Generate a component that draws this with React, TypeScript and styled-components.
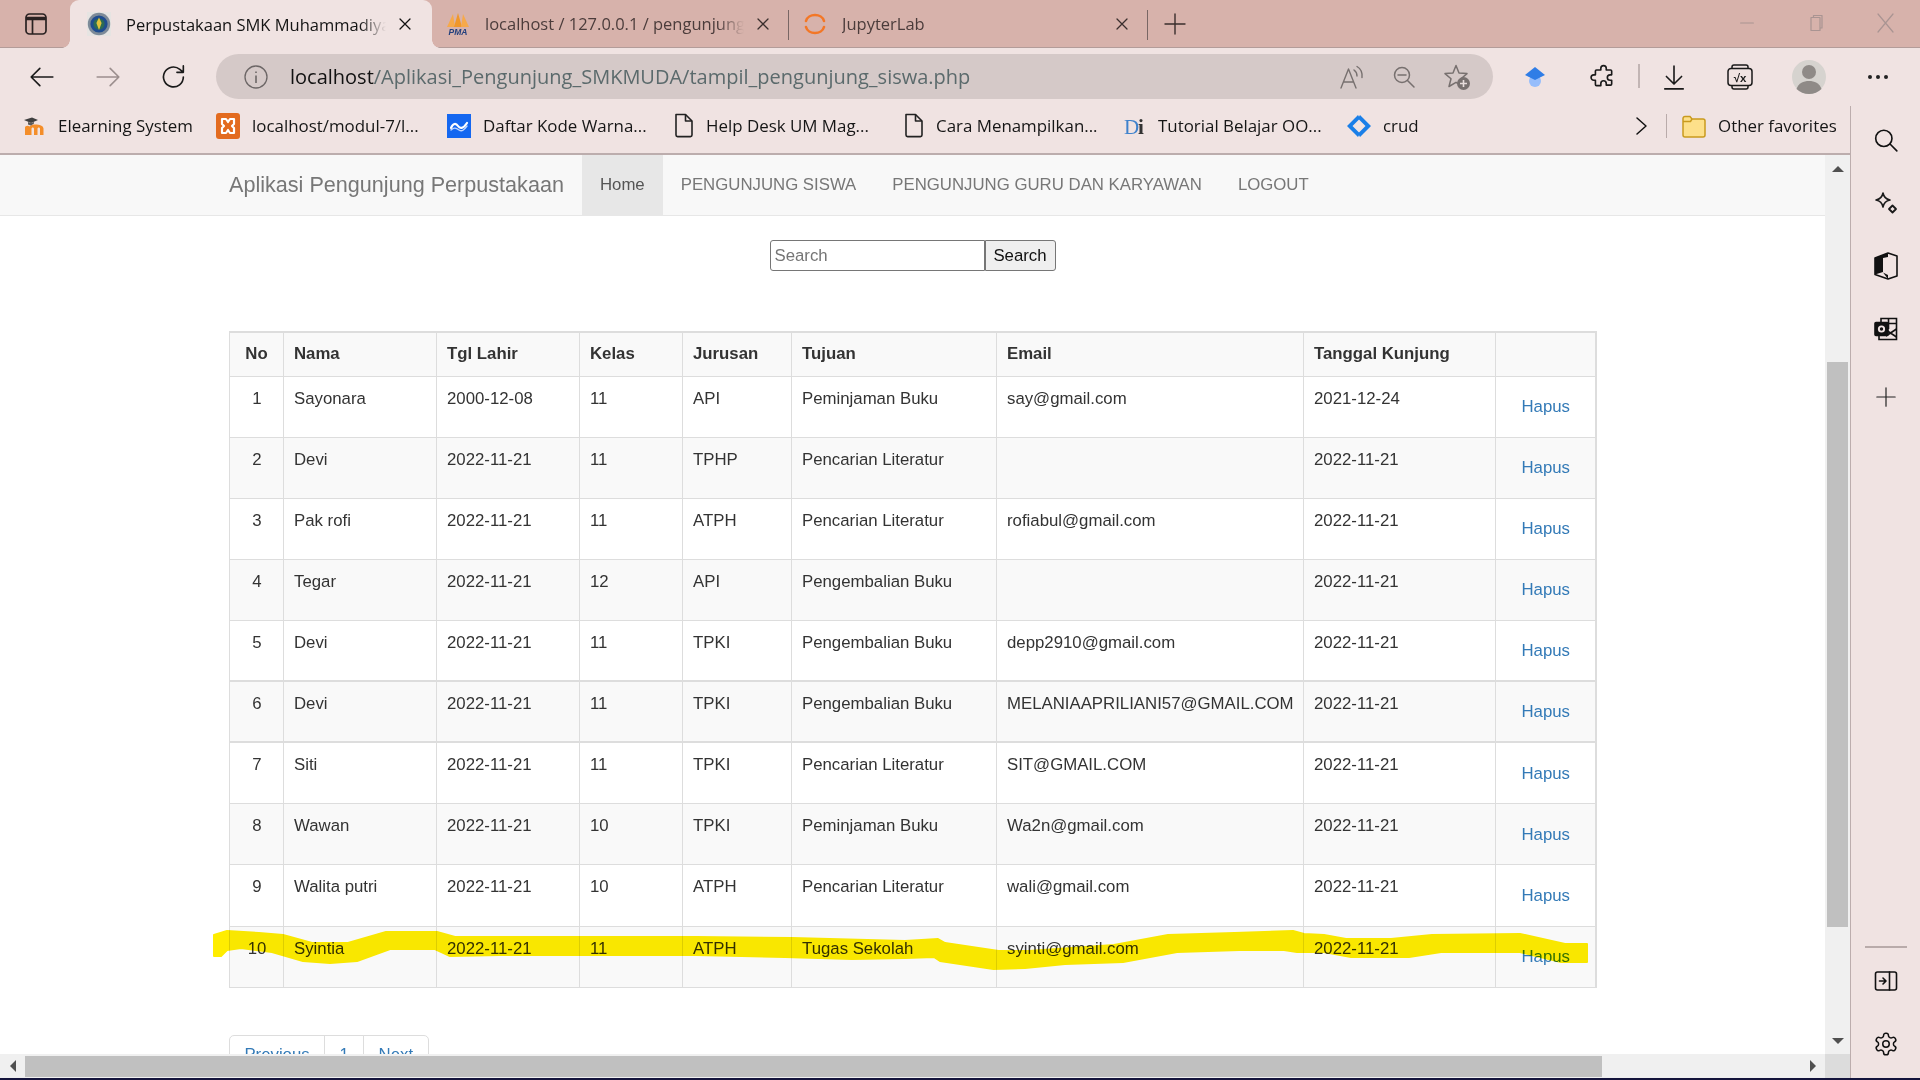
import React from "react";
import styled, { createGlobalStyle } from "styled-components";

const Global = createGlobalStyle`
  html, body { margin: 0; padding: 0; background: #f0e3e2; }
  * { box-sizing: border-box; }
`;

const chromeFont = `"Open Sans", "Noto Sans", sans-serif`;
const pageFont = `"Liberation Sans", Arial, sans-serif`;

const Screen = styled.div`
  width: 1920px;
  height: 1080px;
  overflow: hidden;
  display: flex;
  flex-direction: column;
  background: #f0e3e2;
  font-family: ${chromeFont};
`;

/* ---------- tab strip ---------- */
const TabStrip = styled.div`
  height: 48px;
  flex: none;
  display: flex;
  align-items: stretch;
  padding-right: 1px;
  background: #d7b2ab;
  border-bottom: 1px solid #b39c99;
`;
const StripToggle = styled.div`
  width: 70px;
  display: flex;
  align-items: center;
  justify-content: center;
  padding-left: 2px;
`;
const Tab = styled.div<{ $width: number; $active?: boolean }>`
  position: relative;
  width: ${(p) => p.$width}px;
  height: ${(p) => (p.$active ? "48px" : "47px")};
  display: flex;
  align-items: center;
  padding: 0 ${(p) => (p.$active ? "17px" : "15px")} 0 ${(p) => (p.$active ? "17px" : "14px")};
  background: ${(p) => (p.$active ? "#f0e3e2" : "transparent")};
  border-radius: ${(p) => (p.$active ? "9px 9px 0 0" : "0")};
  color: ${(p) => (p.$active ? "#141414" : "#4b3c3b")};
  ${(p) =>
    p.$active &&
    `
    &::before, &::after {
      content: "";
      position: absolute;
      bottom: 0;
      width: 8px;
      height: 8px;
    }
    &::before { left: -8px; background: radial-gradient(circle at 0 0, transparent 7.5px, #f0e3e2 8px); }
    &::after { right: -8px; background: radial-gradient(circle at 100% 0, transparent 7.5px, #f0e3e2 8px); }
  `}
`;
const TabTitle = styled.span`
  flex: 1;
  min-width: 0;
  margin: 0 9px 0 15px;
  font-size: 16.5px;
  white-space: nowrap;
  overflow: hidden;
  -webkit-mask-image: linear-gradient(to right, #000 calc(100% - 26px), transparent);
  mask-image: linear-gradient(to right, #000 calc(100% - 26px), transparent);
`;
const TabDivider = styled.div`
  width: 1px;
  height: 30px;
  margin-top: 10px;
  background: #786664;
`;
const NewTab = styled.div`
  width: 54px;
  display: flex;
  align-items: center;
  justify-content: center;
`;
const StripSpacer = styled.div`
  flex: 1;
`;
const WindowButton = styled.div`
  width: 69px;
  display: flex;
  align-items: center;
  justify-content: center;
  padding-bottom: 2px;
`;

/* ---------- toolbar ---------- */
const Toolbar = styled.div`
  height: 58px;
  flex: none;
  display: flex;
  align-items: flex-start;
  padding: 6px 0 0 9px;
`;
const ToolButton = styled.div<{ $width?: number }>`
  width: ${(p) => p.$width ?? 66}px;
  height: 45px;
  flex: none;
  display: flex;
  align-items: center;
  justify-content: center;
`;
const PuzzleButton = styled(ToolButton)`
  padding-left: 3px;
`;
const AddressBar = styled.div`
  width: 1277px;
  height: 45px;
  margin: 0 9px;
  flex: none;
  display: flex;
  align-items: center;
  padding: 0 22px 0 28px;
  background: #d5c9c8;
  border-radius: 23px;
`;
const AddressText = styled.div`
  flex: 1;
  margin-left: 22px;
  font-size: 20px;
  color: #5b6a6c;
  white-space: nowrap;
`;
const AddressHost = styled.span`
  color: #111;
`;
const AddressIcons = styled.div`
  display: flex;
  align-items: center;
  gap: 27px;
`;
const ToolDivider = styled.div`
  width: 2px;
  height: 24px;
  margin: 10px 1px 0 4px;
  background: #c2b5b4;
`;

/* ---------- body ---------- */
const Workspace = styled.div`
  flex: 1;
  min-height: 0;
  display: flex;
`;
const MainColumn = styled.div`
  width: 1850px;
  flex: none;
  display: flex;
  flex-direction: column;
`;
const BookmarksBar = styled.div`
  height: 47px;
  flex: none;
  display: flex;
  align-items: center;
  padding: 0 0 8px 22px;
  color: #161616;
  font-size: 16.9px;
`;
const Bookmark = styled.div<{ $width?: number }>`
  width: ${(p) => (p.$width ? `${p.$width}px` : "auto")};
  flex: none;
  display: flex;
  align-items: center;
  gap: 12px;
  white-space: nowrap;
`;
const BookmarkTail = styled.div`
  margin-left: auto;
  display: flex;
  align-items: center;
`;
const BarDivider = styled.div`
  width: 1px;
  height: 24px;
  margin: 0 15px 0 13px;
  background: #b9abaa;
`;
const Frame = styled.div`
  flex: 1;
  min-height: 0;
  display: flex;
  flex-direction: column;
  border-top: 2px solid #bcadad;
`;
const FrameTop = styled.div`
  flex: 1;
  min-height: 0;
  display: flex;
`;
const Page = styled.div`
  position: relative;
  flex: 1;
  min-width: 0;
  overflow: hidden;
  background: #fff;
  color: #333;
  font-family: ${pageFont};
  font-size: 16.8px;
  line-height: 24px;
`;

/* ---------- navbar ---------- */
const Navbar = styled.nav`
  height: 61px;
  display: flex;
  align-items: stretch;
  padding-left: 229px;
  background: #f8f8f8;
  border-bottom: 1px solid #e7e7e7;
`;
const Brand = styled.div`
  display: flex;
  align-items: center;
  margin-right: 18px;
  font-size: 21.6px;
  color: #777;
  white-space: nowrap;
`;
const NavLink = styled.a<{ $active?: boolean }>`
  display: flex;
  align-items: center;
  padding: 0 18px;
  color: ${(p) => (p.$active ? "#555" : "#777")};
  background: ${(p) => (p.$active ? "#e7e7e7" : "transparent")};
  white-space: nowrap;
`;

/* ---------- search ---------- */
const SearchForm = styled.form`
  display: flex;
  justify-content: center;
  margin-top: 24px;
  height: 31px;
`;
const SearchInput = styled.input`
  width: 215px;
  height: 31px;
  padding: 0 4px;
  border: 1px solid #767676;
  border-radius: 3px 0 0 3px;
  font-family: ${pageFont};
  font-size: 16.8px;
  &::placeholder { color: #757575; opacity: 1; }
`;
const SearchButton = styled.button`
  width: 71px;
  height: 31px;
  padding: 0;
  border: 1px solid #767676;
  border-radius: 0 3px 3px 0;
  background: #efefef;
  color: #111;
  font-family: ${pageFont};
  font-size: 16.8px;
`;

/* ---------- table ---------- */
const Table = styled.table`
  margin: 60px 0 0 229px;
  width: 1366px;
  table-layout: fixed;
  border-collapse: collapse;
  border-top: 2px solid #ddd;
  border-right: 2px solid #ddd;
`;
const HeadCell = styled.th<{ $center?: boolean }>`
  height: 44px;
  padding: 0 10px;
  border: 1px solid #ddd;
  border-bottom-width: 1px;
  background: #f9f9f9;
  font-weight: 700;
  text-align: ${(p) => (p.$center ? "center" : "left")};
`;
const Row = styled.tr<{ $striped: boolean; $tall?: boolean }>`
  height: ${(p) => (p.$tall ? "62px" : "61px")};
  background: ${(p) => (p.$striped ? "#f9f9f9" : "#fff")};
`;
const Cell = styled.td<{ $center?: boolean; $thick?: boolean }>`
  padding: 10px 9px 0 10px;
  vertical-align: top;
  border: 1px solid #ddd;
  border-top-width: ${(p) => (p.$thick ? "2px" : "1px")};
  text-align: ${(p) => (p.$center ? "center" : "left")};
  white-space: nowrap;
  overflow: hidden;
`;
const ActionCell = styled(Cell)<{ $low?: boolean }>`
  padding: ${(p) => (p.$low ? "19px" : "18px")} 0 0 1px;
  text-align: center;
`;
const Link = styled.a`
  color: #337ab7;
`;

/* ---------- pagination ---------- */
const Pagination = styled.div`
  display: flex;
  width: max-content;
  margin: 47px 0 0 229px;
`;
const PageItem = styled.a`
  height: 41px;
  padding: 7px 14.4px;
  margin-left: -1px;
  border: 1px solid #ddd;
  color: #337ab7;
  background: #fff;
  &:first-child { margin-left: 0; border-radius: 5px 0 0 5px; }
  &:last-child { border-radius: 0 5px 5px 0; }
`;

/* ---------- scrollbars ---------- */
const VTrack = styled.div`
  width: 25px;
  flex: none;
  display: flex;
  flex-direction: column;
  align-items: center;
  background: #f0f0f0;
`;
const VThumb = styled.div`
  width: 21px;
  height: 565px;
  flex: none;
  margin: 0 0 auto;
  background: #c0c0c0;
`;
const ArrowBox = styled.div<{ $height: number }>`
  height: ${(p) => p.$height}px;
  flex: none;
  display: flex;
  align-items: center;
  justify-content: center;
`;
const ArrowUp = styled.div`
  width: 0;
  height: 0;
  border-left: 6px solid transparent;
  border-right: 6px solid transparent;
  border-bottom: 6px solid #505050;
`;
const ArrowDown = styled.div`
  width: 0;
  height: 0;
  border-left: 6px solid transparent;
  border-right: 6px solid transparent;
  border-top: 6px solid #505050;
`;
const HBar = styled.div`
  height: 24px;
  flex: none;
  display: flex;
  background: #f0f0f0;
`;
const HArrow = styled.div`
  width: 25px;
  flex: none;
  display: flex;
  align-items: center;
  justify-content: center;
`;
const ArrowLeft = styled.div`
  width: 0;
  height: 0;
  border-top: 6px solid transparent;
  border-bottom: 6px solid transparent;
  border-right: 6px solid #505050;
`;
const ArrowRight = styled.div`
  width: 0;
  height: 0;
  border-top: 6px solid transparent;
  border-bottom: 6px solid transparent;
  border-left: 6px solid #505050;
`;
const HThumb = styled.div`
  width: 1577px;
  height: 21px;
  margin-top: 2px;
  background: #c0c0c0;
`;
const HTrackRest = styled.div`
  flex: 1;
`;
const Corner = styled.div`
  width: 25px;
  flex: none;
  background: #dcdcdc;
`;

/* ---------- side panel ---------- */
const SidePanel = styled.aside`
  flex: 1;
  display: flex;
  flex-direction: column;
  align-items: center;
  padding: 2px 0 3px;
  border-left: 1px solid #bcadad;
`;
const SideButton = styled.div`
  width: 60px;
  height: 63px;
  flex: none;
  display: flex;
  align-items: center;
  justify-content: center;
`;
const SideAddButton = styled(SideButton)`
  margin-top: 5px;
`;
const SideRule = styled.div`
  width: 42px;
  height: 2px;
  flex: none;
  margin: auto 0 1px;
  background: #b9abaa;
`;
const BottomEdge = styled.div`
  height: 2px;
  flex: none;
  background: #14143c;
`;

/* ---------- highlighter stroke ---------- */
const Highlight = styled.svg`
  position: absolute;
  left: 0;
  top: 0;
  width: 1825px;
  height: 899px;
  mix-blend-mode: multiply;
  pointer-events: none;
`;

/* ---------- icons ---------- */
type IconProps = { size?: number; color?: string; sw?: number };
const Line = ({ d, size = 24, color = "#1a1a1a", sw = 1.5 }: IconProps & { d: string }) => (
  <svg width={size} height={size} viewBox="0 0 24 24" fill="none" stroke={color} strokeWidth={sw} strokeLinecap="round" strokeLinejoin="round">
    <path d={d} />
  </svg>
);

const Emblem = () => (
  <svg width="24" height="24" viewBox="0 0 24 24">
    <rect width="24" height="24" fill="#e6e4e2" />
    <circle cx="12" cy="12" r="11.2" fill="#7d8a98" />
    <circle cx="12" cy="12" r="8.6" fill="#1f4c8f" />
    <circle cx="12" cy="12" r="5.6" fill="#2c6b56" />
    <path d="M12 5.5l2.6 5.5-2.6 7-2.6-7z" fill="#e0c23c" />
  </svg>
);
const PmaIcon = () => (
  <svg width="24" height="24" viewBox="0 0 24 24">
    <path d="M1 15 7 2l2 13z" fill="#f6a94a" />
    <path d="M8 15 12 1l4 14z" fill="#f0972a" />
    <path d="M15 15 17 2l6 13z" fill="#f6a94a" />
    <text x="12" y="23" textAnchor="middle" fontFamily="Liberation Sans" fontSize="8.5" fontWeight="700" fontStyle="italic" fill="#23407d">PMA</text>
  </svg>
);
const JupyterIcon = () => (
  <svg width="24" height="26" viewBox="0 0 24 26" fill="none" stroke="#f37726" strokeWidth="2.6" strokeLinecap="round">
    <path d="M3 10C5 2 19 2 21 10" />
    <path d="M3 16C5 24 19 24 21 16" />
  </svg>
);
const MoodleIcon = () => (
  <svg width="24" height="24" viewBox="0 0 24 24">
    <path d="M3 21V13.500c0-1.500 3-2.500 4.500-1 1.500-1.500 3-2 5.500-2 5 0 8 1 8.500 4V21h-3.500v-6c0-2-2.500-2-2.500 0v6h-3.500v-6c0-2-2.500-2-2.500 0v6z" fill="#f48e2a" />
    <path d="M2 6l8-2.500L16 6 9 9z" fill="#3f3f3f" />
    <path d="M6 8v2.500l3 1 3-2V8L9 9z" fill="#5a5a5a" />
  </svg>
);
const XamppIcon = () => (
  <svg width="24" height="26" viewBox="0 0 24 26">
    <rect width="24" height="26" rx="3" fill="#e36b1f" />
    <path d="M6 6h4l2 3 2-3h4v5l-2 2 2 2v5h-4l-2-3-2 3H6v-5l2-2-2-2z" fill="none" stroke="#fff" strokeWidth="2.2" strokeLinejoin="round" />
  </svg>
);
const WaveIcon = () => (
  <svg width="24" height="24" viewBox="0 0 24 24">
    <rect width="24" height="24" fill="#1467f0" />
    <path d="M4 14c2-5 5-5 7-2s5 3 9-3" fill="none" stroke="#fff" strokeWidth="2.2" strokeLinecap="round" />
    <path d="M4 16c3-3 5-2 8 0s5 0 8-4" fill="none" stroke="#bcd4ff" strokeWidth="1.4" strokeLinecap="round" />
  </svg>
);
const DocIcon = () => (
  <svg width="20" height="25" viewBox="0 0 20 25" fill="none" stroke="#222" strokeWidth="1.6" strokeLinejoin="round">
    <path d="M2 1.5h9.5L18 8v14a1.6 1.6 0 0 1-1.6 1.6H3.600A1.600 1.600 0 0 1 2 22z" />
    <path d="M11.500 1.500V8H18" />
  </svg>
);
const DiIcon = () => (
  <svg width="22" height="24" viewBox="0 0 22 24">
    <text x="0" y="20" fontFamily="Liberation Serif" fontSize="21" fontWeight="400" fill="#3f82cc">D</text>
    <text x="14" y="20" fontFamily="Liberation Serif" fontSize="21" fontWeight="700" fill="#333">i</text>
  </svg>
);
const CrudIcon = () => (
  <svg width="24" height="24" viewBox="0 0 24 24" fill="#1a7fe8">
    <path d="M11 1 0 12l11 11 2-3.500L5.500 12 13 4.500z" />
    <path d="M13 1 24 12 13 23l-2-3.500 7.500-7.500L11 4.500z" />
  </svg>
);
const FolderIcon = () => (
  <svg width="24" height="24" viewBox="0 0 24 24">
    <path d="M1 4.500A2 2 0 0 1 3 2.500h5l2 2.500h11a2 2 0 0 1 2 2v14a2 2 0 0 1-2 2H3a2 2 0 0 1-2-2z" fill="#fde08a" stroke="#c99a1e" strokeWidth="1.500" />
    <path d="M1 7.500h7.500L10 5" fill="none" stroke="#c99a1e" strokeWidth="1.500" />
  </svg>
);
const ScholarIcon = () => (
  <svg width="24" height="24" viewBox="0 0 24 24">
    <circle cx="12" cy="16" r="6" fill="#96bdfb" />
    <path d="M12 2 22 10l-10 5L2 10z" fill="#2f7de6" />
  </svg>
);
const VxIcon = () => (
  <svg width="26" height="26" viewBox="0 0 26 26" fill="none" stroke="#1a1a1a" strokeWidth="1.500">
    <rect x="1" y="4.500" width="24" height="17" rx="3" />
    <path d="M5 4.500V3a2 2 0 0 1 2-2h12a2 2 0 0 1 2 2v1.500M5 21.500V23a2 2 0 0 0 2 2h12a2 2 0 0 0 2-2v-1.500" />
    <text x="13" y="18" textAnchor="middle" fontFamily="Liberation Sans" fontSize="11.500" fontWeight="700" fill="#1a1a1a" stroke="none">√x</text>
  </svg>
);
const Avatar = () => (
  <svg width="34" height="34" viewBox="0 0 34 34">
    <circle cx="17" cy="17" r="17" fill="#d6d3cf" />
    <circle cx="17" cy="12" r="7" fill="#8f8a87" />
    <path d="M4.500 29c2-6 7-8 12.500-8s10.500 2 12.500 8c-3 3-8 5-12.500 5s-9.500-2-12.500-5z" fill="#8f8a87" />
  </svg>
);
const ReadAloud = () => (
  <svg width="26" height="26" viewBox="0 0 26 26" fill="none" stroke="#77706f" strokeWidth="1.400" strokeLinecap="round" strokeLinejoin="round">
    <path d="M2 24 9.500 5 17 24M4.500 18h10" />
    <path d="M15 6c2 1.500 3 3.500 3 6M18 2.500c3.500 2 5.500 6 5 11" />
  </svg>
);
const ZoomOutIcon = () => (
  <svg width="24" height="24" viewBox="0 0 24 24" fill="none" stroke="#77706f" strokeWidth="1.500" strokeLinecap="round">
    <circle cx="10" cy="10" r="7.500" />
    <path d="M6 10h8M15.500 15.500 22 22" />
  </svg>
);
const StarPlus = () => (
  <svg width="28" height="28" viewBox="0 0 28 28">
    <path d="M13 2.500l3 7.500 8 .6-6 5.200 2 7.700-7-4.200-7 4.200 2-7.700-6-5.200 8-.6z" fill="none" stroke="#77706f" strokeWidth="1.500" strokeLinejoin="round" />
    <circle cx="20.500" cy="20.500" r="6.500" fill="#77706f" />
    <path d="M20.500 17v7M17 20.500h7" stroke="#e6dcdb" strokeWidth="1.600" />
  </svg>
);
const SparkleIcon = () => (
  <svg width="24" height="24" viewBox="0 0 24 24" fill="none" stroke="#1a1a1a" strokeWidth="1.600" strokeLinejoin="round">
    <path d="M9 2c.8 4.200 2.800 6.200 7 7-4.200.8-6.200 2.800-7 7-.8-4.200-2.800-6.200-7-7 4.200-.8 6.200-2.800 7-7z" />
    <path d="M18.500 14.500l3.500 3.500-3.500 3.500-3.500-3.500z" strokeWidth="1.800" />
  </svg>
);
const OfficeIcon = () => (
  <svg width="24" height="28" viewBox="0 0 24 28">
    <path d="M14 1 1 6v16.500L14 27l9-3V4z" fill="none" stroke="#111" strokeWidth="1.600" strokeLinejoin="round" />
    <path d="M14 1 1 6v16.500l8-2.500V6l5-1zM9 20.500l5 6.500V23z" fill="#111" />
  </svg>
);
const OutlookIcon = () => (
  <svg width="24" height="24" viewBox="0 0 24 24" fill="none" stroke="#111" strokeWidth="1.600">
    <path d="M7 5V1.500h15.500V22.500H5V18" />
    <path d="M14.500 1.500V12M7 6.500h15.500" />
    <path d="M12 13l10.500 7M12 19l10.500-7" />
    <rect x="1" y="5.500" width="13" height="13" rx="1" fill="#111" />
    <circle cx="7.500" cy="12" r="3.600" fill="#f0e3e2" stroke="none" />
    <circle cx="7.500" cy="12" r="1.700" fill="#111" stroke="none" />
  </svg>
);
const PanelIcon = () => (
  <svg width="24" height="24" viewBox="0 0 24 24" fill="none" stroke="#111" strokeWidth="1.600" strokeLinecap="round" strokeLinejoin="round">
    <rect x="1.500" y="3" width="21" height="18" rx="2" />
    <path d="M15.500 3v18M5.500 12h6M9 9l3 3-3 3" />
  </svg>
);
const GearIcon = () => (
  <svg width="26" height="26" viewBox="0 0 24 24" fill="none" stroke="#111" strokeWidth="1.400" strokeLinecap="round" strokeLinejoin="round">
    <path d="M12.220 2h-.44a2 2 0 0 0-2 2v.18a2 2 0 0 1-1 1.730l-.43.250a2 2 0 0 1-2 0l-.150-.080a2 2 0 0 0-2.730.730l-.220.380a2 2 0 0 0 .730 2.730l.150.100a2 2 0 0 1 1 1.720v.510a2 2 0 0 1-1 1.740l-.150.090a2 2 0 0 0-.730 2.730l.220.380a2 2 0 0 0 2.730.730l.150-.080a2 2 0 0 1 2 0l.430.250a2 2 0 0 1 1 1.730V20a2 2 0 0 0 2 2h.440a2 2 0 0 0 2-2v-.180a2 2 0 0 1 1-1.730l.430-.250a2 2 0 0 1 2 0l.150.080a2 2 0 0 0 2.730-.730l.220-.390a2 2 0 0 0-.730-2.730l-.150-.080a2 2 0 0 1-1-1.740v-.500a2 2 0 0 1 1-1.740l.150-.090a2 2 0 0 0 .730-2.730l-.220-.380a2 2 0 0 0-2.730-.730l-.150.080a2 2 0 0 1-2 0l-.430-.250a2 2 0 0 1-1-1.730V4a2 2 0 0 0-2-2z" />
    <circle cx="12" cy="12" r="3" />
  </svg>
);

/* ---------- data ---------- */
const rows: [string, string, string, string, string, string, string, string][] = [
  ["1", "Sayonara", "2000-12-08", "11", "API", "Peminjaman Buku", "say@gmail.com", "2021-12-24"],
  ["2", "Devi", "2022-11-21", "11", "TPHP", "Pencarian Literatur", "", "2022-11-21"],
  ["3", "Pak rofi", "2022-11-21", "11", "ATPH", "Pencarian Literatur", "rofiabul@gmail.com", "2022-11-21"],
  ["4", "Tegar", "2022-11-21", "12", "API", "Pengembalian Buku", "", "2022-11-21"],
  ["5", "Devi", "2022-11-21", "11", "TPKI", "Pengembalian Buku", "depp2910@gmail.com", "2022-11-21"],
  ["6", "Devi", "2022-11-21", "11", "TPKI", "Pengembalian Buku", "MELANIAAPRILIANI57@GMAIL.COM", "2022-11-21"],
  ["7", "Siti", "2022-11-21", "11", "TPKI", "Pencarian Literatur", "SIT@GMAIL.COM", "2022-11-21"],
  ["8", "Wawan", "2022-11-21", "10", "TPKI", "Peminjaman Buku", "Wa2n@gmail.com", "2022-11-21"],
  ["9", "Walita putri", "2022-11-21", "10", "ATPH", "Pencarian Literatur", "wali@gmail.com", "2022-11-21"],
  ["10", "Syintia", "2022-11-21", "11", "ATPH", "Tugas Sekolah", "syinti@gmail.com", "2022-11-21"],
];
const colWidths = [54, 153, 143, 103, 109, 205, 307, 192, 100];
const headers = ["No", "Nama", "Tgl Lahir", "Kelas", "Jurusan", "Tujuan", "Email", "Tanggal Kunjung", ""];

const strokePath =
  "M214 935L227 931L259 933L283 935L312 943L348 943L386 932L437 932L455 937L500 937L696 937L792 938L905 941L938 939L945 943L998.500 951L1029 951L1114 945L1168 935L1234.500 933L1293 931L1304 934L1324 935L1346 939L1391 939L1432 935L1520 934L1565 944L1587 944L1587 962L1561 962L1520 952L1441 952L1409 957L1351 957L1324 952L1297 952L1284 950L1239.500 950L1177 952L1123 962L1065 964L1025 968L993.500 969L940 961L934 957L905 958L852 959L785 957L696 955L500 955L450 956L435 949L390 949L357 961L330 963L303 961L272 952L241 948L227 950L221 956L214 956Z";

export default function App() {
  return (
    <Screen>
      <Global />
      <TabStrip>
        <StripToggle>
          <svg width="22" height="22" viewBox="0 0 22 22" fill="none" stroke="#2a2222" strokeWidth="1.700">
            <rect x="1" y="1" width="20" height="20" rx="3.500" />
            <path d="M1 5.500h20" strokeWidth="3.500" />
            <path d="M7.500 6v15" />
          </svg>
        </StripToggle>
        <Tab $width={362} $active>
          <Emblem />
          <TabTitle>Perpustakaan SMK Muhammadiyah</TabTitle>
          <Line d="M6 6l12 12M18 6 6 18" size={20} color="#111" />
        </Tab>
        <Tab $width={356}>
          <PmaIcon />
          <TabTitle>localhost / 127.0.0.1 / pengunjung</TabTitle>
          <Line d="M6 6l12 12M18 6 6 18" size={20} color="#3a2e2d" />
        </Tab>
        <TabDivider />
        <Tab $width={358}>
          <JupyterIcon />
          <TabTitle>JupyterLab</TabTitle>
          <Line d="M6 6l12 12M18 6 6 18" size={20} color="#3a2e2d" />
        </Tab>
        <TabDivider />
        <NewTab>
          <Line d="M12 2v20M2 12h20" size={24} color="#3a2e2d" sw={1.4} />
        </NewTab>
        <StripSpacer />
        <WindowButton>
          <Line d="M5 12h14" size={22} color="#a99492" sw={1.2} />
        </WindowButton>
        <WindowButton>
          <Line d="M7 6.500h9v13H7zM9.500 6.500V4.500h8.500v12.500h-2" size={24} color="#a99492" sw={1.2} />
        </WindowButton>
        <WindowButton>
          <Line d="M5 3l15 18M20 3 5 21" size={24} color="#a99492" sw={1.2} />
        </WindowButton>
      </TabStrip>

      <Toolbar>
        <ToolButton>
          <Line d="M22 12H2M10 4l-8 8 8 8" size={26} sw={1.5} />
        </ToolButton>
        <ToolButton>
          <Line d="M2 12h20M14 4l8 8-8 8" size={26} color="#9c8f8e" sw={1.5} />
        </ToolButton>
        <ToolButton>
          <Line d="M20 12a8.500 8.500 0 1 1-3-6.500L20 8M20 2.500V8h-5.500" size={28} sw={1.4} />
        </ToolButton>
        <AddressBar>
          <svg width="24" height="24" viewBox="0 0 24 24" fill="none" stroke="#6c6666" strokeWidth="1.300">
            <circle cx="12" cy="12" r="11" />
            <path d="M12 10.500V18M12 6.500v1.600" strokeWidth="1.600" />
          </svg>
          <AddressText>
            <AddressHost>localhost</AddressHost>/Aplikasi_Pengunjung_SMKMUDA/tampil_pengunjung_siswa.php
          </AddressText>
          <AddressIcons>
            <ReadAloud />
            <ZoomOutIcon />
            <StarPlus />
          </AddressIcons>
        </AddressBar>
        <ToolButton>
          <ScholarIcon />
        </ToolButton>
        <PuzzleButton>
          <Line d="M10 4a2.500 2.500 0 0 1 5 0v1.500h4a1 1 0 0 1 1 1v3.500h-1.500a2.500 2.500 0 0 0 0 5H20v3.500a1 1 0 0 1-1 1h-4v-1.500a2.500 2.500 0 0 0-5 0V20H6a1 1 0 0 1-1-1v-4H3.500a2.500 2.500 0 0 1 0-5H5V6.500a1 1 0 0 1 1-1h4z" size={26} />
        </PuzzleButton>
        <ToolDivider />
        <ToolButton>
          <Line d="M12 2v16M5 11.500l7 7 7-7M3.500 23h17" size={26} />
        </ToolButton>
        <ToolButton>
          <VxIcon />
        </ToolButton>
        <ToolButton $width={72}>
          <Avatar />
        </ToolButton>
        <ToolButton>
          <svg width="22" height="6" viewBox="0 0 22 6" fill="#222">
            <circle cx="3" cy="3" r="2" />
            <circle cx="11" cy="3" r="2" />
            <circle cx="19" cy="3" r="2" />
          </svg>
        </ToolButton>
      </Toolbar>

      <Workspace>
        <MainColumn>
          <BookmarksBar>
            <Bookmark $width={194}>
              <MoodleIcon />
              Elearning System
            </Bookmark>
            <Bookmark $width={231}>
              <XamppIcon />
              localhost/modul-7/l...
            </Bookmark>
            <Bookmark $width={227}>
              <WaveIcon />
              Daftar Kode Warna...
            </Bookmark>
            <Bookmark $width={230}>
              <DocIcon />
              Help Desk UM Mag...
            </Bookmark>
            <Bookmark $width={220}>
              <DocIcon />
              Cara Menampilkan...
            </Bookmark>
            <Bookmark $width={223}>
              <DiIcon />
              Tutorial Belajar OO...
            </Bookmark>
            <Bookmark>
              <CrudIcon />
              crud
            </Bookmark>
            <BookmarkTail>
              <Line d="M8 4l9 8-9 8" size={24} color="#111" />
              <BarDivider />
              <Bookmark $width={168}>
                <FolderIcon />
                Other favorites
              </Bookmark>
            </BookmarkTail>
          </BookmarksBar>
          <Frame>
            <FrameTop>
              <Page>
                <Navbar>
                  <Brand>Aplikasi Pengunjung Perpustakaan</Brand>
                  <NavLink $active>Home</NavLink>
                  <NavLink>PENGUNJUNG SISWA</NavLink>
                  <NavLink>PENGUNJUNG GURU DAN KARYAWAN</NavLink>
                  <NavLink>LOGOUT</NavLink>
                </Navbar>
                <SearchForm>
                  <SearchInput placeholder="Search" />
                  <SearchButton type="button">Search</SearchButton>
                </SearchForm>
                <Table>
                  <colgroup>
                    {colWidths.map((w, i) => (
                      <col key={i} style={{ width: w }} />
                    ))}
                  </colgroup>
                  <thead>
                    <tr>
                      {headers.map((h, i) => (
                        <HeadCell key={i} $center={i === 0}>
                          {h}
                        </HeadCell>
                      ))}
                    </tr>
                  </thead>
                  <tbody>
                    {rows.map((r, i) => (
                      <Row key={r[0]} $striped={i % 2 === 1} $tall={i === 8}>
                        {r.map((c, j) => (
                          <Cell key={j} $center={j === 0} $thick={i === 5 || i === 6}>
                            {c}
                          </Cell>
                        ))}
                        <ActionCell $thick={i === 5 || i === 6} $low={i >= 6 && i <= 8}>
                          <Link>Hapus</Link>
                        </ActionCell>
                      </Row>
                    ))}
                  </tbody>
                </Table>
                <Pagination>
                  <PageItem>Previous</PageItem>
                  <PageItem>1</PageItem>
                  <PageItem>Next</PageItem>
                </Pagination>
                <Highlight viewBox="0 155 1825 899">
                  <path d={strokePath} fill="#ffed00" stroke="#ffed00" strokeWidth="2" strokeLinejoin="round" />
                </Highlight>
              </Page>
              <VTrack>
                <ArrowBox $height={27}>
                  <ArrowUp />
                </ArrowBox>
                <ArrowBox $height={180} />
                <VThumb />
                <ArrowBox $height={26}>
                  <ArrowDown />
                </ArrowBox>
              </VTrack>
            </FrameTop>
            <HBar>
              <HArrow>
                <ArrowLeft />
              </HArrow>
              <HThumb />
              <HTrackRest />
              <HArrow>
                <ArrowRight />
              </HArrow>
              <Corner />
            </HBar>
          </Frame>
        </MainColumn>
        <SidePanel>
          <SideButton>
            <Line d="M10 3a7.500 7.500 0 1 0 0 15 7.500 7.500 0 0 0 0-15zM15.500 15.500 22 22" size={26} color="#111" />
          </SideButton>
          <SideButton>
            <SparkleIcon />
          </SideButton>
          <SideButton>
            <OfficeIcon />
          </SideButton>
          <SideButton>
            <OutlookIcon />
          </SideButton>
          <SideAddButton>
            <Line d="M12 2v20M2 12h20" size={22} color="#222" sw={1.3} />
          </SideAddButton>
          <SideRule />
          <SideButton>
            <PanelIcon />
          </SideButton>
          <SideButton>
            <GearIcon />
          </SideButton>
        </SidePanel>
      </Workspace>
      <BottomEdge />
    </Screen>
  );
}
